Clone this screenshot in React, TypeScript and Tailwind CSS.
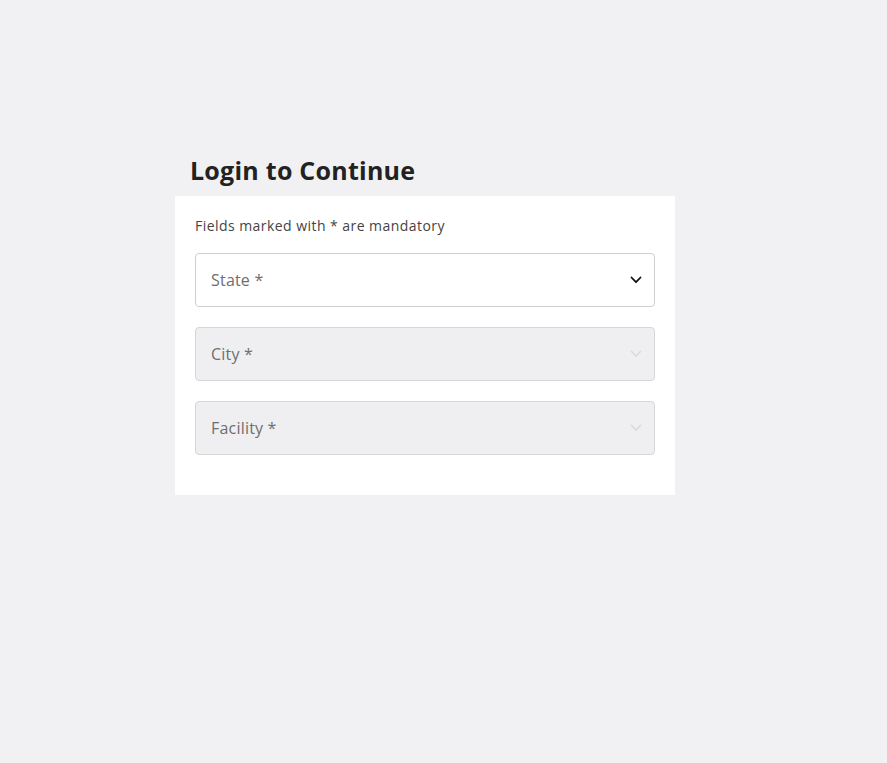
import React from "react";

function Chevron({ color }: { color: string }) {
  return (
    <svg width="12" height="8" viewBox="0 0 12 8" fill="none">
      <path d="M1.5 1.5 L6 6.2 L10.5 1.5" stroke={color} strokeWidth="1.8" strokeLinecap="round" strokeLinejoin="round" />
    </svg>
  );
}

function Field({ label, disabled }: { label: string; disabled?: boolean }) {
  return (
    <div
      className={
        "flex h-[54px] items-center justify-between rounded-[4px] border pl-[15px] pr-[12px] " +
        (disabled ? "border-[#d6d6d8] bg-[#efeff1]" : "border-[#cfcfd2] bg-white")
      }
    >
      <span className="text-[16px] tracking-[0.2px] text-[#6e6e6e]">{label}</span>
      <Chevron color={disabled ? "#dcdcde" : "#111111"} />
    </div>
  );
}

export default function App() {
  return (
    <div
      className="min-h-screen bg-[#f1f1f3] pl-[175px] pt-[152px]"
      style={{ fontFamily: '"Open Sans", "Noto Sans", sans-serif' }}
    >
      <h1 className="mb-2 pl-[15px] text-[25px] font-bold leading-[36px] tracking-[0.25px] text-[#222222]">
        Login to Continue
      </h1>
      <div className="w-[500px] bg-white px-5 pb-[40px] pt-5">
        <p className="text-[14px] leading-[20px] tracking-[0.45px] text-[#444444]">Fields marked with * are mandatory</p>
        <div className="mt-[17px] flex flex-col gap-5">
          <Field label="State *" />
          <Field label="City *" disabled />
          <Field label="Facility *" disabled />
        </div>
      </div>
    </div>
  );
}
